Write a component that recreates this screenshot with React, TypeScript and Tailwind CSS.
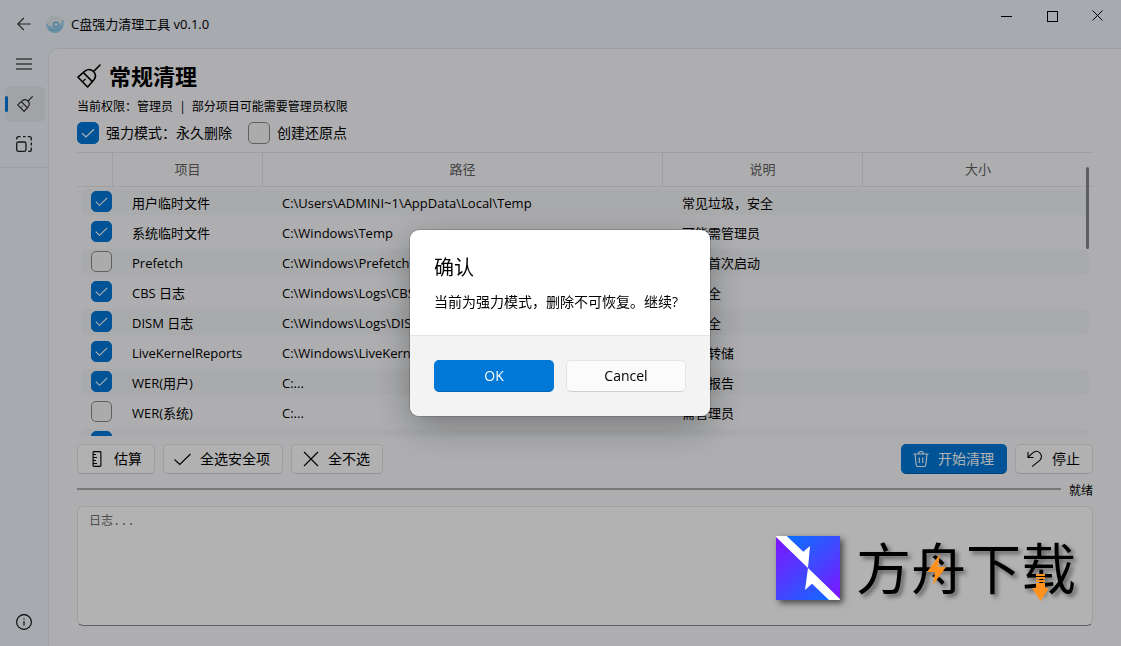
import React, { useState } from "react";

const rows = [
  { name: "用户临时文件", path: "C:\\Users\\ADMINI~1\\AppData\\Local\\Temp", note: "常见垃圾，安全", checked: true },
  { name: "系统临时文件", path: "C:\\Windows\\Temp", note: "可能需管理员", checked: true },
  { name: "Prefetch", path: "C:\\Windows\\Prefetch", note: "影响首次启动", checked: false },
  { name: "CBS 日志", path: "C:\\Windows\\Logs\\CBS", note: "较安全", checked: true },
  { name: "DISM 日志", path: "C:\\Windows\\Logs\\DISM", note: "较安全", checked: true },
  { name: "LiveKernelReports", path: "C:\\Windows\\LiveKernelReports", note: "内核转储", checked: true },
  { name: "WER(用户)", path: "C:...", note: "错误报告", checked: true },
  { name: "WER(系统)", path: "C:...", note: "需管理员", checked: false },
  { name: "", path: "", note: "", checked: true },
];

const Broom = ({ size }: { size: number }) => (
  <svg width={size} height={size} viewBox="0 0 24 24" fill="none" stroke="currentColor" strokeWidth="1.6" strokeLinecap="round" strokeLinejoin="round">
    <path d="M23 1L16.8 7.2" />
    <path d="M1 13.2L8.2 6.8C10.8 5 14 5.2 16.5 7.5C19 10 19 13 17 15.8L10.6 23Z" />
    <path d="M6.4 8.6L15.4 17.6" />
    <path d="M8.2 15.2L5.8 17.4" strokeWidth="1.2" />
  </svg>
);

const CheckBox = ({ id, label, checked }: { id: string; label?: string; checked: boolean }) => (
  <span className="relative inline-flex shrink-0">
    <input
      id={id}
      type="checkbox"
      aria-label={label}
      defaultChecked={checked}
      className={
        "peer appearance-none rounded-[5px] border border-[#8a8a8a] bg-[#f5f5f5] checked:border-[#0078d7] checked:bg-[#0078d7] " +
        (label ? "size-[21px]" : "size-[22px]")
      }
    />
    <svg className="pointer-events-none absolute inset-0 hidden size-full peer-checked:block" viewBox="0 0 22 22" fill="none" stroke="white" strokeWidth="1.2">
      <path d="M5 11.2L9 15L17 7.2" />
    </svg>
  </span>
);

const ToolButton = ({ text, icon, primary }: { text: string; icon: React.ReactNode; primary?: boolean }) => (
  <button
    className={
      "flex h-[30px] shrink-0 items-center gap-[9px] rounded-[5px] border pr-3 pl-[11px] text-sm " +
      (primary
        ? "border-[#0078d7] border-b-[#005ea8] bg-[#0078d7] text-white"
        : "border-[#e3e3e6] border-b-[#cfcfd2] bg-[#fefefe] text-black")
    }
  >
    <svg width="16" height="16" viewBox="0 0 16 16" fill="none" stroke="currentColor" strokeWidth="1.1" className="overflow-visible">
      {icon}
    </svg>
    {text}
  </button>
);

const TitleBar = () => (
  <header className="flex h-12 shrink-0 items-start justify-between">
    <div className="flex h-12 items-center">
      <button aria-label="返回" className="flex w-12 justify-center text-[#333]">
        <svg width="14" height="14" viewBox="0 0 14 14" fill="none" stroke="currentColor" strokeWidth="1.1">
          <path d="M13.5 7H1M6.8 1L0.8 7L6.8 13" />
        </svg>
      </button>
      <svg width="18" height="18" viewBox="0 0 18 18" className="-ml-0.5 mr-[7px]">
        <circle cx="9" cy="9" r="9" fill="#e4ebef" />
        <path d="M0 8C2 10.5 4 11.5 6.5 11.5C6 7.5 8 5.8 10.5 6.2C13 6.6 13.8 8.4 13.2 10C14.6 9.4 15.8 7.5 16 5L17.6 5.6C18.6 12 14.8 18 9 18C3.6 18 -0.4 13.4 0 8Z" fill="#9dd0ec" />
        <path d="M3 14C6 16.4 12 16.2 15 12.4" stroke="#7bbfe2" strokeWidth="1.4" fill="none" />
        <circle cx="10" cy="9.6" r="2.2" fill="#e4f1f8" stroke="#5fa9d4" strokeWidth="1" />
      </svg>
      <span className="pt-0.5 text-[13px]">C盘强力清理工具 v0.1.0</span>
    </div>
    <div className="flex">
      <button aria-label="最小化" className="flex h-8 w-[46px] items-center justify-center">
        <svg width="11" height="11" viewBox="0 0 11 11" stroke="black"><path d="M0 5.5H11" /></svg>
      </button>
      <button aria-label="最大化" className="flex h-8 w-[46px] items-center justify-center">
        <svg width="11" height="11" viewBox="0 0 11 11" stroke="black" fill="none"><rect x="0.5" y="0.5" width="10" height="10" /></svg>
      </button>
      <button aria-label="关闭" className="flex h-8 w-[46px] items-center justify-center">
        <svg width="12" height="12" viewBox="0 0 12 12" stroke="black"><path d="M0.5 0.5L10.5 10.5M10.5 0.5L0.5 10.5" /></svg>
      </button>
    </div>
  </header>
);

const SideBar = () => (
  <nav className="flex w-12 shrink-0 flex-col items-center text-[#222]">
    <button aria-label="菜单" className="flex h-8 w-10 items-center justify-center text-[#555]">
      <svg width="16" height="12" viewBox="0 0 16 12" stroke="currentColor" strokeWidth="1.4"><path d="M0 1H16M0 6H16M0 11H16" /></svg>
    </button>
    <button aria-label="常规清理" className="relative mt-1.5 ml-0.5 flex h-9 w-10 items-center justify-center rounded-md bg-[#e7eaef]">
      <span className="absolute left-0 h-4 w-[3px] rounded-full bg-[#0078d7]" />
      <Broom size={16} />
    </button>
    <button aria-label="大文件" className="mt-1 flex h-9 w-10 items-center justify-center">
      <svg width="16" height="16" viewBox="0 0 16 16" fill="none" stroke="currentColor" strokeWidth="1.3">
        <rect x="0.7" y="6" width="9.3" height="9.3" rx="1.8" />
        <path d="M0.7 3.6V2.6C0.7 1.5 1.5 0.7 2.6 0.7H4.6M7 0.7H9.6M11.8 0.7H13.4C14.5 0.7 15.3 1.5 15.3 2.6V4.4M15.3 6.6V9.4M15.3 11.6V13.4C15.3 14.5 14.5 15.3 13.4 15.3H12.2" />
      </svg>
    </button>
    <div className="mt-[5px] w-full border-t border-[#e1e5ea]" />
    <button aria-label="关于" className="mt-auto mb-4 flex size-4 items-center justify-center text-black">
      <svg width="16" height="16" viewBox="0 0 16 16" fill="none" stroke="currentColor" strokeWidth="1.1" className="shrink-0">
        <circle cx="8" cy="8" r="7.4" />
        <path d="M8 7V11.5M8 4.4V5.6" />
      </svg>
    </button>
  </nav>
);

const CleanTable = () => (
  <div className="relative mt-2 mb-2 min-h-0 flex-1 overflow-hidden">
    <table className="w-full table-fixed border-separate border-spacing-0 text-[13px]">
      <colgroup>
        <col className="w-9" />
        <col className="w-[150px]" />
        <col className="w-[400px]" />
        <col className="w-[200px]" />
        <col />
      </colgroup>
      <thead>
        <tr className="h-[35px] text-[#606060]">
          <th aria-label="选择" className="border-y border-r border-[#e6e6e8] p-0"></th>
          <th className="border-y border-r border-[#e6e6e8] p-0 font-normal">项目</th>
          <th className="border-y border-r border-[#e6e6e8] p-0 font-normal">路径</th>
          <th className="border-y border-r border-[#e6e6e8] p-0 font-normal">说明</th>
          <th className="border-y border-[#e6e6e8] p-0 font-normal">大小</th>
        </tr>
      </thead>
      <tbody>
        {rows.map((row, i) => (
          <tr key={i} className="group h-[30px] whitespace-nowrap">
            <td className="rounded-l-lg border-y-2 border-l-4 border-transparent bg-clip-padding p-0 pl-2.5 group-odd:bg-[#f3f4f6]">
              <div className="flex h-[26px] items-start pt-0.5">
                <CheckBox id={"row-" + i} label={row.name || "项目"} checked={row.checked} />
              </div>
            </td>
            <td className="border-y-2 border-transparent bg-clip-padding p-0 pt-0.5 pl-[19px] leading-6 group-odd:bg-[#f3f4f6]">{row.name}</td>
            <td className="border-y-2 border-transparent bg-clip-padding p-0 pt-0.5 pl-[19px] leading-6 group-odd:bg-[#f3f4f6]">{row.path}</td>
            <td className="border-y-2 border-transparent bg-clip-padding p-0 pt-0.5 pl-[19px] leading-6 group-odd:bg-[#f3f4f6]">{row.note}</td>
            <td className="rounded-r-lg border-y-2 border-r-4 border-transparent bg-clip-padding p-0 group-odd:bg-[#f3f4f6]"></td>
          </tr>
        ))}
      </tbody>
    </table>
    <div className="absolute top-[15px] right-1 h-[82px] w-[3px] rounded-full bg-[#868789]" />
  </div>
);

const ConfirmDialog = ({ onClose }: { onClose: () => void }) => (
  <div className="fixed inset-0 flex items-center justify-center bg-black/30 pr-px">
    <div role="dialog" aria-labelledby="dialog-title" className="w-[300px] overflow-hidden rounded-[9px] bg-white shadow-[0_0_0_1px_rgba(0,0,0,0.15),0_10px_36px_rgba(0,0,0,0.32)]">
      <div className="px-6 pt-6 pb-[23px]">
        <h2 id="dialog-title" className="text-xl leading-7">确认</h2>
        <p className="mt-2.5 text-sm leading-5">当前为强力模式，删除不可恢复。继续?</p>
      </div>
      <div className="grid grid-cols-2 gap-3 border-t border-[#e5e5e5] bg-[#f3f3f3] px-6 py-6">
        <button onClick={onClose} className="h-8 rounded-[5px] border border-[#0078d7] border-b-[#0067b8] bg-[#0078d7] text-sm text-white">OK</button>
        <button onClick={onClose} className="h-8 rounded-[5px] border border-[#e5e5e5] border-b-[#d0d0d0] bg-[#fbfbfb] text-sm">Cancel</button>
      </div>
    </div>
  </div>
);

const Watermark = () => (
  <div className="pointer-events-none fixed right-[45px] bottom-[46px] flex items-center gap-4">
    <svg width="64" height="64" viewBox="0 0 64 64" className="overflow-visible drop-shadow-[3px_3px_3px_rgba(0,0,0,0.6)]">
      <defs>
        <linearGradient id="upper" x1="0.2" y1="0" x2="1" y2="0.9">
          <stop offset="0" stopColor="#0a6fff" />
          <stop offset="0.5" stopColor="#4148ff" />
          <stop offset="1" stopColor="#7c16ff" />
        </linearGradient>
        <linearGradient id="lower" x1="0" y1="0.1" x2="0.8" y2="1">
          <stop offset="0" stopColor="#7c16ff" />
          <stop offset="0.5" stopColor="#4a40ff" />
          <stop offset="1" stopColor="#1268ff" />
        </linearGradient>
      </defs>
      <path d="M0 0H64V64Z" fill="url(#upper)" />
      <path d="M0 0V64H64Z" fill="url(#lower)" />
      <path d="M0 0H10.7L27.3 15.7L34 10L32 32L64 63V64H53L36 47.7L29 54L32 32L0 1Z" fill="white" />
    </svg>
    <div className="relative text-[55px] leading-[64px] font-normal whitespace-nowrap text-black [text-shadow:3px_3px_4px_rgba(0,0,0,0.45)]">
      方舟下载
      <svg className="absolute top-[18px] left-[71px]" width="19" height="31" viewBox="0 0 19 31" fill="#ff921e">
        <path d="M13 0L0 18H8L6 31L19 13H11Z" />
      </svg>
      <svg className="absolute top-[38px] left-[176px]" width="17" height="27" viewBox="0 0 17 27" fill="#ff921e">
        <path d="M4 0H13V2H4ZM4 3H13V5H4ZM4 6H13V8H4ZM4 9H13V14H17L8.5 27L0 14H4Z" />
      </svg>
    </div>
  </div>
);

const App = () => {
  const [open, setOpen] = useState(true);

  return (
    <div className="flex h-screen flex-col overflow-hidden bg-[#eff4fb] font-['Open_Sans','Noto_Sans_CJK_SC',sans-serif] text-black">
      <TitleBar />
      <div className="flex min-h-0 flex-1">
        <SideBar />
        <main className="flex min-w-0 flex-1 flex-col rounded-tl-[10px] border-t border-l border-[#e3e5e9] bg-[#f9fafd] px-7 pt-[11px] pb-5">
          <div className="flex h-8 items-center gap-2">
            <Broom size={24} />
            <h1 className="text-[22px] leading-8 font-bold">常规清理</h1>
          </div>
          <p className="mt-[5px] text-xs leading-5">
            当前权限：管理员 <span className="mx-[3px]">|</span> 部分项目可能需要管理员权限
          </p>
          <div className="mt-[5px] flex h-[22px] items-center text-sm">
            <CheckBox id="force" checked={true} />
            <label htmlFor="force" className="ml-[7px]">强力模式：永久删除</label>
            <span className="ml-4 inline-flex">
              <CheckBox id="restore" checked={false} />
            </span>
            <label htmlFor="restore" className="ml-[7px]">创建还原点</label>
          </div>
          <CleanTable />
          <div className="flex gap-2">
            <ToolButton text="估算" icon={<path d="M5 0.6H11C11.5 0.6 11.9 1 11.9 1.5V14.5C11.9 15 11.5 15.4 11 15.4H5C4.5 15.4 4.1 15 4.1 14.5V1.5C4.1 1 4.5 0.6 5 0.6ZM4.1 3.5H7M4.1 6.5H8M4.1 9.5H7M4.1 12.5H8" />} />
            <ToolButton text="全选安全项" icon={<path d="M-0.5 8.5L4.8 13.5L15.5 3" />} />
            <ToolButton text="全不选" icon={<path d="M1 1L15 15M15 1L1 15" />} />
            <div className="flex-1" />
            <ToolButton primary text="开始清理" icon={<path d="M0.5 3H15.5M5.5 3C5.5 1.4 6.5 0.5 8 0.5C9.5 0.5 10.5 1.4 10.5 3M2 3L3.2 14C3.3 15 3.9 15.5 4.8 15.5H11.2C12.1 15.5 12.7 15 12.8 14L14 3M6.3 6.5V12M9.7 6.5V12" />} />
            <ToolButton text="停止" icon={<path d="M1 1V6.5H6.5M1 6.3L5.5 2.2C7.8 0 10.8 0 12.8 1.8C15 4 15 7.2 12.8 9.4L5 15.6" />} />
          </div>
          <div className="my-2 flex h-4 items-center gap-2">
            <div className="-mt-0.5 h-0.5 flex-1 bg-[#acacae]" />
            <span className="pt-0.5 text-xs leading-4">就绪</span>
          </div>
          <textarea
            aria-label="日志"
            placeholder="日志..."
            readOnly
            className="h-[120px] shrink-0 resize-none rounded-md border border-[#e6e6e8] border-b-[#8c8c90] bg-white px-[11px] py-[5px] font-['Liberation_Mono','Noto_Sans_CJK_SC',monospace] text-xs leading-5 placeholder:text-[#707070]"
          />
        </main>
      </div>
      {open && <ConfirmDialog onClose={() => setOpen(false)} />}
      <Watermark />
    </div>
  );
};

export default App;
